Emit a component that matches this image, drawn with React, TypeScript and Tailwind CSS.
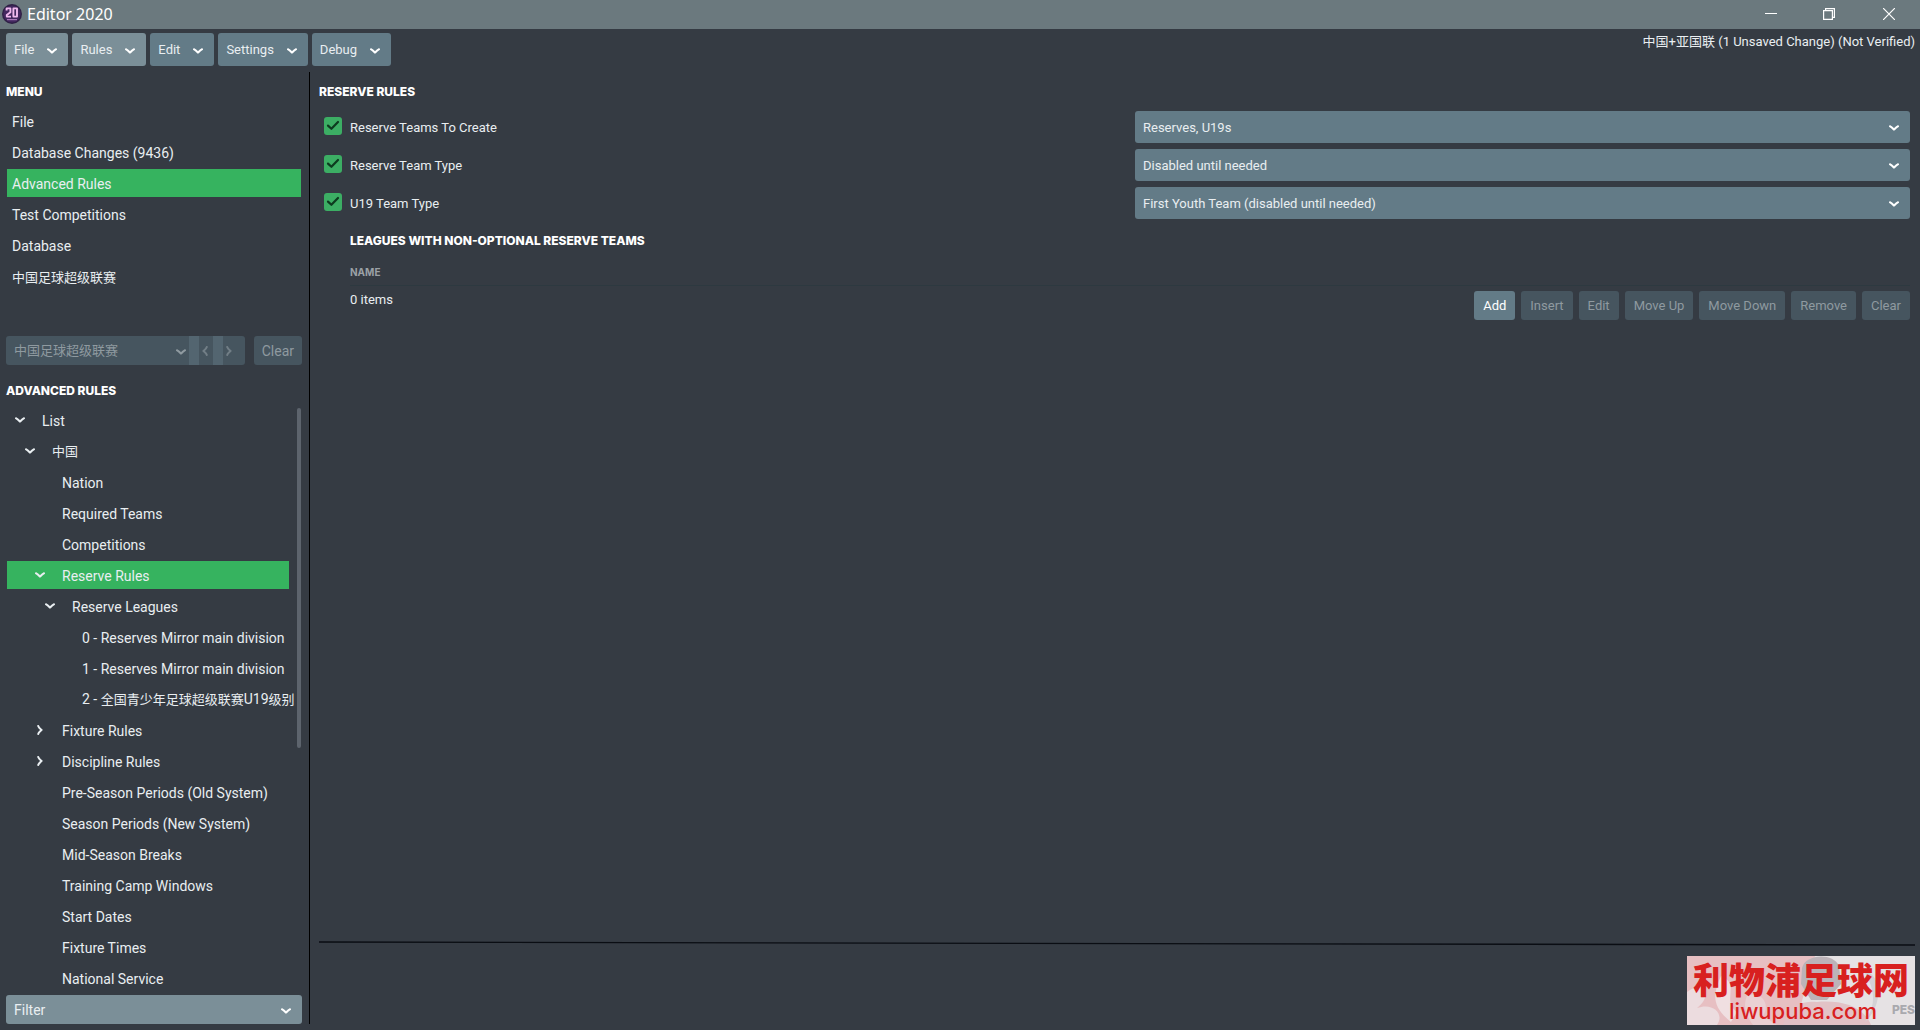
import { useState } from 'react';
import clsx from 'clsx';

type TreeNode = {
  label: string;
  level: number;
  state?: 'open' | 'closed';
};

const TOOLBAR = [
  { label: 'File', hot: true },
  { label: 'Rules', hot: true },
  { label: 'Edit', hot: false },
  { label: 'Settings', hot: false },
  { label: 'Debug', hot: false },
];

const MENU = [
  'File',
  'Database Changes (9436)',
  'Advanced Rules',
  'Test Competitions',
  'Database',
  '中国足球超级联赛',
];

const TREE: TreeNode[] = [
  { label: 'List', level: 0, state: 'open' },
  { label: '中国', level: 1, state: 'open' },
  { label: 'Nation', level: 2 },
  { label: 'Required Teams', level: 2 },
  { label: 'Competitions', level: 2 },
  { label: 'Reserve Rules', level: 2, state: 'open' },
  { label: 'Reserve Leagues', level: 3, state: 'open' },
  { label: '0 - Reserves Mirror main division', level: 4 },
  { label: '1 - Reserves Mirror main division', level: 4 },
  { label: '2 - 全国青少年足球超级联赛U19级别', level: 4 },
  { label: 'Fixture Rules', level: 2, state: 'closed' },
  { label: 'Discipline Rules', level: 2, state: 'closed' },
  { label: 'Pre-Season Periods (Old System)', level: 2 },
  { label: 'Season Periods (New System)', level: 2 },
  { label: 'Mid-Season Breaks', level: 2 },
  { label: 'Training Camp Windows', level: 2 },
  { label: 'Start Dates', level: 2 },
  { label: 'Fixture Times', level: 2 },
  { label: 'National Service', level: 2 },
];

const INDENT = ['pl-2', 'pl-[18px]', 'pl-7', 'pl-[38px]', 'pl-12'];

const RULES = [
  { id: 'teams', label: 'Reserve Teams To Create', value: 'Reserves, U19s' },
  { id: 'reserve', label: 'Reserve Team Type', value: 'Disabled until needed' },
  { id: 'u19', label: 'U19 Team Type', value: 'First Youth Team (disabled until needed)' },
];

const ACTIONS = ['Add', 'Insert', 'Edit', 'Move Up', 'Move Down', 'Remove', 'Clear'];

const HEADING = "font-['Inter','Liberation_Sans',sans-serif] text-xs leading-4 font-extrabold text-white uppercase";

// Chinese glyphs are set one pixel smaller than the Latin text around them
function Label({ text }: { text: string }) {
  return (
    <>
      {text.split(/([\u4e00-\u9fff]+)/).map((part, i) =>
        i % 2 ? (
          <span key={i} className="text-[13px]">
            {part}
          </span>
        ) : (
          part
        ),
      )}
    </>
  );
}

function Chevron({ className }: { className?: string }) {
  return (
    <svg viewBox="0 0 10 10" className={clsx('h-[10px] w-[10px] shrink-0', className)} fill="none" aria-hidden="true">
      <path d="M1 3.2C2.4 3.6 3.6 5 5 6.6C6.4 5 7.6 3.6 9 3.2" stroke="currentColor" strokeWidth="2" strokeLinecap="round" strokeLinejoin="round" />
    </svg>
  );
}

function TitleBar() {
  return (
    <header className="flex h-[29px] shrink-0 items-center bg-[#6b797e] pl-[2px] text-white">
      <svg viewBox="0 0 20 20" className="mb-px h-5 w-5" aria-hidden="true">
        <circle cx="10" cy="10" r="10" fill="#2f2046" />
        <circle cx="10" cy="10" r="8.6" fill="#43285f" />
        <g fill="none" stroke="#f0b9ee" strokeWidth="1.9" strokeLinejoin="round">
          <path d="M4.6 6.6V4.4H8.4V8.2L4.8 11V12.6H9" />
          <path d="M11.4 4.4H15V12.6H11.4Z" />
        </g>
        <path d="M5 15.6H15" stroke="#a977b8" strokeWidth="1.2" />
      </svg>
      <h1 className="ml-[5px] pb-px font-['Noto_Sans','Open_Sans',sans-serif] text-base leading-5">Editor 2020</h1>
      <div className="ml-auto flex h-full pb-px">
        <button aria-label="Minimize" className="flex w-[58px] items-center justify-center">
          <svg viewBox="0 0 12 12" className="h-3 w-3" fill="none" stroke="currentColor">
            <path d="M0 5.5H12" />
          </svg>
        </button>
        <button aria-label="Restore" className="flex w-[58px] items-center justify-center">
          <svg viewBox="0 0 12 12" className="h-3 w-3" fill="none" stroke="currentColor" strokeWidth="1.2">
            <path d="M0.6 2.6H9.4V11.4H0.6Z M2.6 2.6V0.6H11.4V9.4H9.4" />
          </svg>
        </button>
        <button aria-label="Close" className="flex w-[62px] items-center justify-center">
          <svg viewBox="0 0 12 12" className="h-3 w-3" fill="none" stroke="currentColor" strokeWidth="1.2">
            <path d="M0 0L12 12M12 0L0 12" />
          </svg>
        </button>
      </div>
    </header>
  );
}

function Toolbar() {
  return (
    <div className="flex shrink-0 items-start justify-between pt-1 pr-[5px] pl-[6px]">
      <div className="flex gap-1">
        {TOOLBAR.map(({ label, hot }) => (
          <button
            key={label}
            className={clsx(
              'flex h-[33px] items-center gap-[13px] rounded-[3px] pt-px pr-[11px] pl-2 leading-5',
              hot ? 'bg-[#7b8f98]' : 'bg-[#637b87]',
            )}
          >
            {label}
            <Chevron className="mt-[2px] text-white" />
          </button>
        ))}
      </div>
      <p className="leading-[18px]">中国+亚国联 (1 Unsaved Change) (Not Verified)</p>
    </div>
  );
}

function Sidebar() {
  const [page, setPage] = useState('Advanced Rules');
  const [node, setNode] = useState('Reserve Rules');

  return (
    <aside className="flex w-[310px] shrink-0 flex-col border-r border-black pr-[7px] pl-[6px]">
      <h2 className={clsx(HEADING, 'pt-3')}>Menu</h2>
      <nav className="mt-[7px] flex flex-col gap-[3px] px-px text-sm">
        {MENU.map((item) => (
          <button
            key={item}
            onClick={() => setPage(item)}
            className={clsx('h-7 pt-px pl-[5px] text-left leading-7', page === item && 'bg-[#36b35f]')}
          >
            <Label text={item} />
          </button>
        ))}
      </nav>

      <div className="mt-[46px] flex h-[29px] justify-between">
        <div className="flex w-[239px] overflow-hidden rounded-[3px] bg-[#46555f] text-[#8f9aa0]">
          <div className="relative flex-1">
            <select
              disabled
              aria-label="Competition"
              className="h-full w-full appearance-none pl-2 opacity-100"
            >
              <option>中国足球超级联赛</option>
            </select>
            <Chevron className="pointer-events-none absolute top-[11px] right-[3px]" />
          </div>
          <button disabled aria-label="Previous" className="flex w-6 items-center border-l-[10px] border-[#536570] pl-px">
            <Chevron className="rotate-90 opacity-60" />
          </button>
          <button disabled aria-label="Next" className="flex w-8 items-center border-l-[10px] border-[#536570] pl-px">
            <Chevron className="-rotate-90 opacity-60" />
          </button>
        </div>
        <button disabled className="rounded-[3px] bg-[#46555f] px-2 text-sm text-[#8f9aa0]">
          Clear
        </button>
      </div>

      <h2 className={clsx(HEADING, 'mt-[18px]')}>Advanced Rules</h2>
      <div className="relative mt-[7px] min-h-0 flex-1 overflow-hidden">
        <ul className="flex flex-col gap-[3px] pr-[13px] pl-px text-sm">
          {TREE.map(({ label, level, state }) => (
            <li key={label}>
              <button
                onClick={() => setNode(label)}
                aria-expanded={state && state === 'open'}
                className={clsx(
                  'flex h-7 w-full items-center gap-[17px] leading-7 whitespace-nowrap',
                  INDENT[level],
                  node === label && 'bg-[#36b35f]',
                )}
              >
                {state ? (
                  <Chevron className={clsx(state === 'closed' && '-rotate-90')} />
                ) : (
                  <span className="w-[10px] shrink-0" />
                )}
                <span className="pt-px">
                  <Label text={label} />
                </span>
              </button>
            </li>
          ))}
        </ul>
        <div className="absolute top-[2px] right-px h-[340px] w-1 rounded-full bg-[#5d646d]" />
      </div>
      <div className="relative h-[29px]">
        <select aria-label="Filter" className="h-full w-full appearance-none rounded-[3px] bg-[#7b8f98] pl-2 text-sm">
          <option>Filter</option>
        </select>
        <Chevron className="pointer-events-none absolute top-[11px] right-[11px] text-white" />
      </div>
    </aside>
  );
}

function RuleRow({ id, label, value }: { id: string; label: string; value: string }) {
  const [checked, setChecked] = useState(true);

  return (
    <div className="grid h-8 grid-cols-[811fr_775fr]">
      <div className="flex items-start pt-[6px]">
        <span className="relative h-[18px] w-[18px]">
          <input
            id={id}
            type="checkbox"
            checked={checked}
            onChange={(e) => setChecked(e.target.checked)}
            className="block h-[18px] w-[18px] appearance-none rounded-[3px] bg-[#3cae64]"
          />
          {checked && (
            <svg viewBox="0 0 18 18" className="pointer-events-none absolute inset-0" fill="none">
              <path d="M4 8.6L7.4 11.8L14 5" stroke="#0d3a1f" strokeWidth="2.2" strokeLinecap="round" strokeLinejoin="round" />
            </svg>
          )}
        </span>
        <label htmlFor={id} className="pl-2 leading-[22px]">
          {label}
        </label>
      </div>
      <div className="relative h-full">
        <select aria-label={label} className="h-full w-full appearance-none rounded-[3px] bg-[#637b87] pt-px pl-2">
          <option>{value}</option>
        </select>
        <Chevron className="pointer-events-none absolute top-3 right-[11px] text-white" />
      </div>
    </div>
  );
}

function Watermark() {
  return (
    <div className="absolute right-[5px] bottom-[5px] h-[69px] w-[228px] bg-[#e6e2e4]">
      <svg viewBox="0 0 228 69" className="absolute inset-0 h-full w-full" fill="none" aria-hidden="true">
        <path d="M0 0H128L108 69H0Z" fill="#e7bfc2" />
        <path d="M0 36C18 22 26 40 10 52C26 46 38 58 30 69H0Z" fill="#ecdcdf" />
        <path d="M34 20C54 28 34 44 50 56L44 66C24 50 26 38 34 20Z" fill="#f0dfe1" />
        <path d="M60 40C74 34 84 48 76 60L90 69H66C58 58 56 50 60 40Z" fill="#ead0d3" />
        <path d="M115 12C118 -2 146 -4 152 10L154 28L140 44H124L114 28Z" fill="#bcb3b8" />
        <path d="M96 69C100 50 116 44 130 46C150 44 176 48 184 69Z" fill="#e2c2c6" />
        <path d="M176 14C196 18 196 50 178 66C190 48 188 32 176 14Z" fill="#d3d1d5" />
      </svg>
      <div className="relative flex flex-col items-center text-[#d8201f]">
        <span className="font-['Noto_Sans_CJK_SC',sans-serif] text-4xl leading-[44px] font-black">利物浦足球网</span>
        <span className="pl-1 font-['Inter',sans-serif] text-[22px] leading-[22px] font-medium">liwupuba.com</span>
      </div>
      <span className="absolute right-0 bottom-[9px] font-['Inter',sans-serif] text-xs leading-3 font-extrabold text-[#a9a9ae]">
        PES
      </span>
    </div>
  );
}

export default function App() {
  return (
    <div className="relative flex h-screen flex-col overflow-hidden bg-[#353b43] font-['Roboto','Noto_Sans_CJK_SC',sans-serif] text-[13px] text-[#e9eef1]">
      <TitleBar />
      <Toolbar />
      <div className="flex min-h-0 flex-1 py-[6px]">
        <Sidebar />
        <main className="flex min-w-0 flex-1 flex-col pl-[9px]">
          <h2 className={clsx(HEADING, 'pt-3')}>Reserve Rules</h2>
          <div className="mt-[11px] mr-[10px] ml-[5px] flex flex-col gap-[6px]">
            {RULES.map((rule) => (
              <RuleRow key={rule.id} {...rule} />
            ))}
          </div>

          <section className="mt-[14px] mr-[10px] ml-[31px]">
            <h3 className={HEADING}>Leagues with non-optional reserve teams</h3>
            <table className="mt-[15px] w-full">
              <thead>
                <tr className="border-b border-[#2d3940]">
                  <th
                    colSpan={2}
                    className="h-[21px] pb-[5px] text-left font-['Inter',sans-serif] text-[10px] leading-4 font-bold text-[#9ba1a6]"
                  >
                    NAME
                  </th>
                </tr>
              </thead>
              <tbody>
                <tr>
                  <td className="pt-1 align-top leading-5">0 items</td>
                  <td className="pt-[5px]">
                    <div className="flex justify-end gap-[6px]">
                      {ACTIONS.map((action) => (
                        <button
                          key={action}
                          disabled={action !== 'Add'}
                          className="h-[29px] rounded-[3px] bg-[#637b87] px-[9px] text-white disabled:bg-[#46555f] disabled:text-[#8f9aa0]"
                        >
                          {action}
                        </button>
                      ))}
                    </div>
                  </td>
                </tr>
              </tbody>
            </table>
          </section>

          <svg viewBox="0 0 1597 5" preserveAspectRatio="none" className="mt-auto mr-[5px] mb-[78px] h-[5px]" aria-hidden="true">
            <path d="M0 1L1597 4" stroke="#0a0d13" strokeWidth="1.3" />
          </svg>
        </main>
      </div>
      <Watermark />
    </div>
  );
}
